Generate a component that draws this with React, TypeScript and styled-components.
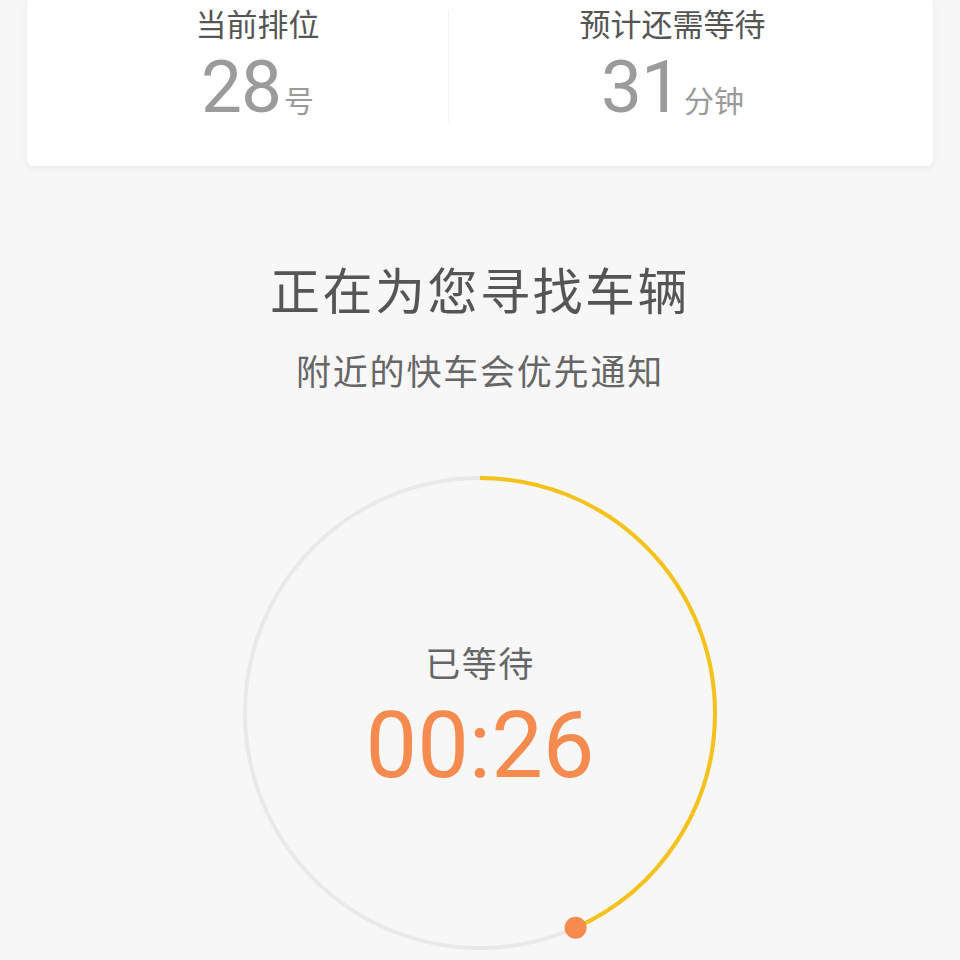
import React from 'react'
import styled, { createGlobalStyle } from 'styled-components'

const GlobalStyle = createGlobalStyle`
  html, body {
    margin: 0;
    padding: 0;
    background: #f7f7f7;
  }
  body {
    font-family: Roboto, "Noto Sans CJK SC", sans-serif;
    width: 960px;
    height: 960px;
    overflow: hidden;
  }
`

const Page = styled.div`
  display: flex;
  flex-direction: column;
  align-items: center;
  width: 960px;
  height: 960px;
  background: #f7f7f7;
`

const QueueCard = styled.div`
  box-sizing: border-box;
  width: 906px;
  height: 166px;
  background: #ffffff;
  border-radius: 0 0 6px 6px;
  box-shadow: 0 2px 6px rgba(0, 0, 0, 0.06);
  display: grid;
  grid-template-columns: 381px 1fr;
  padding: 0 37px 0 40px;
`

const Stat = styled.div<{ $divided?: boolean }>`
  display: flex;
  flex-direction: column;
  align-items: center;
  border-left: ${({ $divided }) => ($divided ? '1px solid #f3f3f3' : 'none')};
  height: 112px;
  margin-top: 10px;
`

const StatLabel = styled.div`
  font-family: "Noto Sans CJK SC", sans-serif;
  font-size: 31px;
  line-height: 45px;
  color: #555555;
  margin-top: -10px;
`

const StatValue = styled.div`
  display: flex;
  align-items: baseline;
  margin-top: 6px;
  color: #9b9b9b;
`

const Number = styled.span`
  font-family: Roboto, sans-serif;
  font-size: 73px;
  line-height: 72px;
  letter-spacing: -1px;
`

const Unit = styled.span`
  font-family: "Noto Sans CJK SC", sans-serif;
  font-size: 30px;
  margin-left: 3px;
`

const Title = styled.h1`
  margin: 92px 0 0;
  font-family: "Noto Sans CJK SC", sans-serif;
  font-weight: 400;
  font-size: 50px;
  line-height: 60px;
  letter-spacing: 2.5px;
  color: #555555;
`

const Subtitle = styled.p`
  margin: 30px 0 0;
  font-family: "Noto Sans CJK SC", sans-serif;
  font-size: 35px;
  line-height: 44px;
  letter-spacing: 1.8px;
  color: #666666;
`

const Dial = styled.div`
  margin-top: 81px;
  display: grid;
  width: 480px;
  height: 480px;
  & > * {
    grid-area: 1 / 1;
  }
`

const DialText = styled.div`
  display: flex;
  flex-direction: column;
  align-items: center;
  justify-content: center;
  padding-top: 6px;
`

const WaitLabel = styled.div`
  font-family: "Noto Sans CJK SC", sans-serif;
  font-size: 35px;
  line-height: 44px;
  letter-spacing: 1.5px;
  color: #666666;
`

const WaitTime = styled.div`
  margin-top: 16px;
  font-family: Roboto, sans-serif;
  font-size: 92px;
  line-height: 92px;
  color: #f68b50;
`

const R = 235
const C = 2 * Math.PI * R
const progress = 156 / 360

const Ring = () => {
  const a = progress * 2 * Math.PI
  const dx = 240 + R * Math.sin(a)
  const dy = 240 - R * Math.cos(a)
  return (
    <svg width="480" height="480" viewBox="0 0 480 480">
      <circle cx="240" cy="240" r={R} fill="none" stroke="#e9e9e9" strokeWidth="4" />
      <circle
        cx="240"
        cy="240"
        r={R}
        fill="none"
        stroke="#f5c21c"
        strokeWidth="4"
        strokeDasharray={`${C * progress} ${C}`}
        transform="rotate(-90 240 240)"
      />
      <circle cx={dx} cy={dy} r="11" fill="#f68b50" />
    </svg>
  )
}

const App = () => {
  return (
    <Page>
      <GlobalStyle />
      <QueueCard>
        <Stat>
          <StatLabel>当前排位</StatLabel>
          <StatValue>
            <Number>28</Number>
            <Unit>号</Unit>
          </StatValue>
        </Stat>
        <Stat $divided>
          <StatLabel>预计还需等待</StatLabel>
          <StatValue>
            <Number>31</Number>
            <Unit>分钟</Unit>
          </StatValue>
        </Stat>
      </QueueCard>

      <Title>正在为您寻找车辆</Title>
      <Subtitle>附近的快车会优先通知</Subtitle>

      <Dial>
        <Ring />
        <DialText>
          <WaitLabel>已等待</WaitLabel>
          <WaitTime>00:26</WaitTime>
        </DialText>
      </Dial>
    </Page>
  )
}

export default App
